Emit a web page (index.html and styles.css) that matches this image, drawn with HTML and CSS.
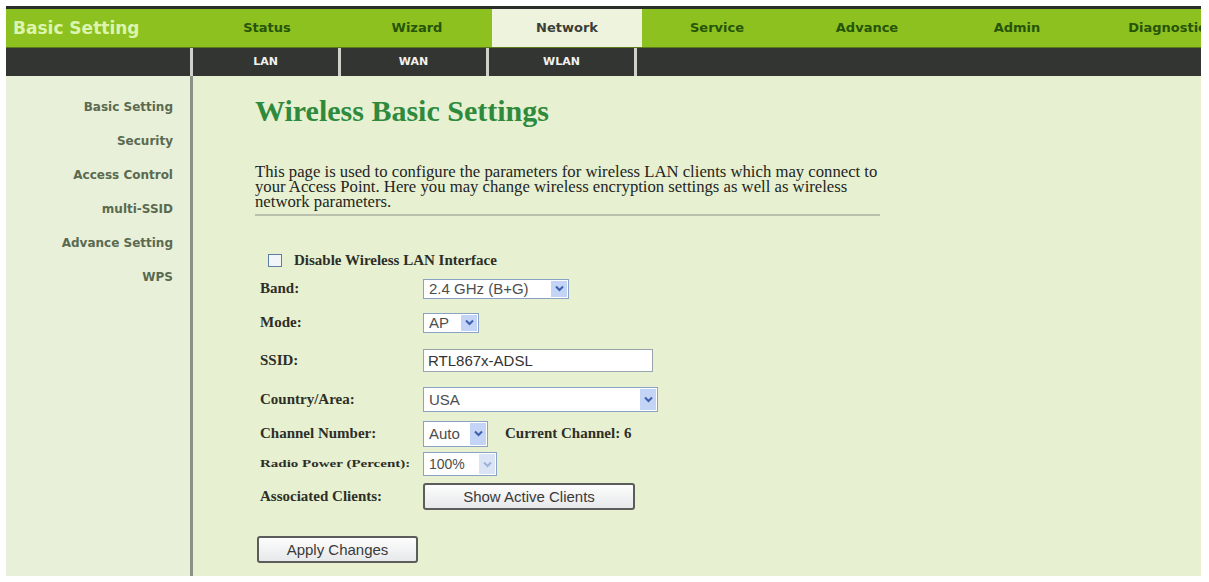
FILE: index.html
```html
<!DOCTYPE html>
<html>
<head lang="en">
    <meta charset="UTF-8">
    <title>Wireless Basic Settings</title>
    <link rel="stylesheet" href="styles.css">
</head>
<body>
<div id="page">
    <div id="topbar">
        <div class="logo">Basic Setting</div>
        <ul class="menu">
            <li>Status</li>
            <li>Wizard</li>
            <li class="active">Network</li>
            <li>Service</li>
            <li>Advance</li>
            <li>Admin</li>
            <li>Diagnostic</li>
        </ul>
    </div>
    <div id="subbar">
        <div class="blank"></div>
        <ul class="submenu">
            <li>LAN</li>
            <li>WAN</li>
            <li>WLAN</li>
        </ul>
    </div>
    <div id="main">
        <ul id="side">
            <li>Basic Setting</li>
            <li>Security</li>
            <li>Access Control</li>
            <li>multi-SSID</li>
            <li>Advance Setting</li>
            <li>WPS</li>
        </ul>
        <div id="content">
            <h1>Wireless Basic Settings</h1>
            <p class="intro">This page is used to configure the parameters for wireless LAN clients which may connect to your Access Point. Here you may change wireless encryption settings as well as wireless network parameters.</p>
            <div class="line"></div>

            <form class="wlan">
                <label class="disable"><input type="checkbox" class="chk"> Disable Wireless LAN Interface</label>
                <div class="rows">
                    <div class="lbl">Band:</div>
                    <div class="ctl">
                        <span class="sel band"><select><option>2.4 GHz (B+G)</option></select><span class="arr"><svg width="9" height="7" viewBox="0 0 9 7"><polyline points="1,1.5 4.5,5 8,1.5" fill="none" stroke="#3d5fb0" stroke-width="2"/></svg></span></span>
                    </div>

                    <div class="lbl">Mode:</div>
                    <div class="ctl">
                        <span class="sel mode"><select><option>AP</option></select><span class="arr"><svg width="9" height="7" viewBox="0 0 9 7"><polyline points="1,1.5 4.5,5 8,1.5" fill="none" stroke="#3d5fb0" stroke-width="2"/></svg></span></span>
                    </div>

                    <div class="lbl">SSID:</div>
                    <div class="ctl">
                        <input type="text" class="txt" value="RTL867x-ADSL">
                    </div>

                    <div class="lbl">Country/Area:</div>
                    <div class="ctl">
                        <span class="sel country"><select><option>USA</option></select><span class="arr"><svg width="9" height="7" viewBox="0 0 9 7"><polyline points="1,1.5 4.5,5 8,1.5" fill="none" stroke="#3d5fb0" stroke-width="2"/></svg></span></span>
                    </div>

                    <div class="lbl">Channel Number:</div>
                    <div class="ctl">
                        <span class="sel channel"><select><option>Auto</option></select><span class="arr"><svg width="9" height="7" viewBox="0 0 9 7"><polyline points="1,1.5 4.5,5 8,1.5" fill="none" stroke="#3d5fb0" stroke-width="2"/></svg></span></span>
                        <span class="cur">Current Channel: 6</span>
                    </div>

                    <div class="lbl"><span class="squash">Radio Power (Percent):</span></div>
                    <div class="ctl">
                        <span class="sel power off"><select><option>100%</option></select><span class="arr"><svg width="9" height="7" viewBox="0 0 9 7"><polyline points="1,1.5 4.5,5 8,1.5" fill="none" stroke="#9fb2d8" stroke-width="2"/></svg></span></span>
                    </div>

                    <div class="lbl">Associated Clients:</div>
                    <div class="ctl">
                        <button type="button" class="btn clients">Show Active Clients</button>
                    </div>
                </div>
                <button type="button" class="btn apply">Apply Changes</button>
            </form>
        </div>
    </div>
</div>
</body>
</html>
```

FILE: styles.css
```css
* {
    margin: 0;
    padding: 0;
}

li {
    list-style: none;
}

body {
    background: #fff;
    font-family: "Liberation Serif", "Times New Roman", serif;
}

#page {
    width: 1195px;
    margin: 6px 0 0 6px;
    overflow: hidden;
}

/* top menu */
#topbar {
    display: flex;
    height: 38px;
    border-top: 3px solid #2a2e28;
    border-bottom: 1px solid #5d7a1c;
    background: #8cc11f;
    overflow: hidden;
}

#topbar .logo {
    flex: none;
    width: 186px;
    padding-left: 7px;
    box-sizing: border-box;
    font: bold 17px/38px "DejaVu Sans", sans-serif;
    color: #dcf5ae;
}

#topbar .menu {
    display: flex;
    flex: none;
}

#topbar .menu li {
    width: 150px;
    text-align: center;
    font: bold 13px/38px "DejaVu Sans", sans-serif;
    color: #275409;
    white-space: nowrap;
}

#topbar .menu li.active {
    background: #eef3de;
    color: #3b3f37;
}

/* second menu */
#subbar {
    display: flex;
    height: 28px;
    background: #323532;
}

#subbar .blank {
    width: 184px;
    border-right: 3px solid #cfd2cb;
}

#subbar .submenu {
    display: flex;
}

#subbar .submenu li {
    width: 145px;
    border-right: 3px solid #cfd2cb;
    text-align: center;
    font: bold 11px/28px "DejaVu Sans", sans-serif;
    color: #f1f1ee;
}

/* body */
#main {
    display: flex;
    height: 500px;
    background: #e7f1d1;
}

#side {
    width: 187px;
    flex: none;
    padding-top: 22px;
    padding-right: 17px;
    box-sizing: border-box;
    border-right: 3px solid #8c9185;
    background: #e8f0d9;
    text-align: right;
}

#side li {
    height: 34px;
    font: bold 12px/18px "DejaVu Sans", sans-serif;
    color: #5a6a50;
}

#content {
    flex: 1;
    padding: 18px 0 0 62px;
}

#content h1 {
    font-size: 30px;
    line-height: 34px;
    color: #2f8a3d;
}

#content .intro {
    width: 636px;
    margin-top: 36px;
    font-size: 16.7px;
    line-height: 15px;
    color: #24241f;
}

#content .line {
    width: 625px;
    margin-top: 5px;
    border-top: 2px solid #b9c0ae;
}

/* form */
.wlan {
    padding-left: 5px;
    margin-top: 31px;
}

.wlan .disable {
    display: flex;
    align-items: center;
    height: 26px;
    font-size: 15px;
    font-weight: bold;
    color: #2e2e28;
}

.chk {
    appearance: none;
    width: 14px;
    height: 13px;
    margin: 0 12px 0 8px;
    border: 1px solid #5f7ea6;
    background: #f3f6f8;
}

.rows {
    display: grid;
    grid-template-columns: 163px auto;
    grid-template-rows: 31px 37px 39px 39px 29px 32px 32px;
}

.lbl {
    display: flex;
    align-items: center;
    font-size: 15px;
    font-weight: bold;
    color: #2e2e28;
    white-space: nowrap;
}

.lbl .squash {
    display: inline-block;
    transform: scaleY(0.65);
}

.ctl {
    display: flex;
    align-items: center;
}

.sel {
    display: inline-flex;
    height: 21px;
    border: 1px solid #8aa3c4;
    background: #fff;
    box-sizing: border-box;
}

.sel select {
    flex: 1;
    min-width: 0;
    appearance: none;
    border: 0;
    background: transparent;
    padding-left: 5px;
    font: 15px "Liberation Sans", Arial, sans-serif;
    color: #4d4d4d;
    outline: none;
}

.sel .arr {
    width: 16px;
    display: flex;
    align-items: center;
    justify-content: center;
    margin: 1px;
    background: #c4d4f6;
}

.sel.band {
    width: 146px;
    height: 20px;
}

.sel.mode {
    width: 56px;
    height: 20px;
}

.sel.country {
    width: 235px;
    height: 25px;
}

.sel.channel {
    width: 65px;
    height: 26px;
}

.sel.power {
    width: 74px;
    height: 24px;
}

.sel.off select {
    font-size: 14px;
}

.sel.off .arr {
    background: #dbe4f4;
}

.txt {
    width: 230px;
    height: 23px;
    box-sizing: border-box;
    border: 1px solid #9aa4ae;
    padding-left: 4px;
    font: 15px "Liberation Sans", Arial, sans-serif;
    color: #333;
    background: #fff;
}

.cur {
    margin-left: 17px;
    font-size: 15px;
    font-weight: bold;
    color: #2e2e28;
}

.btn {
    height: 27px;
    border: 2px solid #5a5d5a;
    border-radius: 3px;
    background: linear-gradient(#fdfdfd, #e6e8ea);
    font: 15px "Liberation Sans", Arial, sans-serif;
    color: #3a3a3a;
}

.btn.clients {
    width: 212px;
}

.btn.apply {
    width: 161px;
    margin: 24px 0 0 -3px;
}
```
